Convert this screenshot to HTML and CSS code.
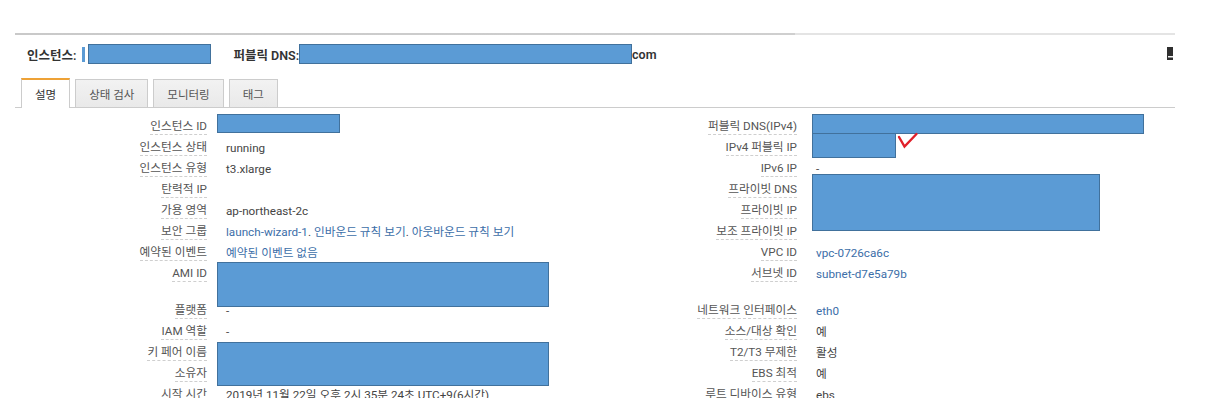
FILE: index.html
```html
<!DOCTYPE html>
<html lang="ko">
<head>
<meta charset="utf-8">
<title>인스턴스 설명</title>
<link rel="stylesheet" href="styles.css">
</head>
<body>
<div class="page">
  <div class="topline"></div>
  <header class="summary">
    <span class="sum-label">인스턴스:</span>
    <span class="sel-bar"></span>
    <span class="redact inst-box"></span>
    <span class="sum-label dns-label">퍼블릭 DNS:</span>
    <span class="redact dns-box"></span>
    <span class="sum-label">com</span>
    <span class="spacer"></span>
    <svg class="corner-icon" width="6" height="13" viewBox="0 0 6 13"><rect x="0" y="0" width="6" height="13" fill="#2f2f2f"/><rect x="1" y="9" width="5" height="1.5" fill="#f2f2f2"/></svg>
  </header>
  <nav class="tabs">
    <span class="tab active">설명</span>
    <span class="tab">상태 검사</span>
    <span class="tab">모니터링</span>
    <span class="tab">태그</span>
  </nav>
  <section class="details">
    <div class="grid">
      <div class="lbl"><span>인스턴스 ID</span></div><div class="val"></div>
      <div class="lbl"><span>퍼블릭 DNS(IPv4)</span></div><div class="val"></div>

      <div class="lbl"><span>인스턴스 상태</span></div><div class="val">running</div>
      <div class="lbl"><span>IPv4 퍼블릭 IP</span></div><div class="val"></div>

      <div class="lbl"><span>인스턴스 유형</span></div><div class="val">t3.xlarge</div>
      <div class="lbl"><span>IPv6 IP</span></div><div class="val">-</div>

      <div class="lbl"><span>탄력적 IP</span></div><div class="val"></div>
      <div class="lbl"><span>프라이빗 DNS</span></div><div class="val"></div>

      <div class="lbl"><span>가용 영역</span></div><div class="val">ap-northeast-2c</div>
      <div class="lbl"><span>프라이빗 IP</span></div><div class="val"></div>

      <div class="lbl"><span>보안 그룹</span></div><div class="val"><a class="link">launch-wizard-1</a>. <a class="link">인바운드 규칙 보기</a>. <a class="link">아웃바운드 규칙 보기</a></div>
      <div class="lbl"><span>보조 프라이빗 IP</span></div><div class="val"></div>

      <div class="lbl"><span>예약된 이벤트</span></div><div class="val"><a class="link">예약된 이벤트 없음</a></div>
      <div class="lbl"><span>VPC ID</span></div><div class="val"><a class="link">vpc-0726ca6c</a></div>

      <div class="lbl"><span>AMI ID</span></div><div class="val two-line"></div>
      <div class="lbl"><span>서브넷 ID</span></div><div class="val"><a class="link">subnet-d7e5a79b</a></div>

      <div class="lbl"><span>플랫폼</span></div><div class="val">-</div>
      <div class="lbl"><span>네트워크 인터페이스</span></div><div class="val"><a class="link">eth0</a></div>

      <div class="lbl"><span>IAM 역할</span></div><div class="val">-</div>
      <div class="lbl"><span>소스/대상 확인</span></div><div class="val">예</div>

      <div class="lbl"><span>키 페어 이름</span></div><div class="val"></div>
      <div class="lbl"><span>T2/T3 무제한</span></div><div class="val">활성</div>

      <div class="lbl"><span>소유자</span></div><div class="val"></div>
      <div class="lbl"><span>EBS 최적</span></div><div class="val">예</div>

      <div class="lbl"><span>시작 시간</span></div><div class="val">2019년 11월 22일 오후 2시 35분 24초 UTC+9(6시간)</div>
      <div class="lbl"><span>루트 디바이스 유형</span></div><div class="val">ebs</div>
    </div>
    <span class="redact ov ov-inst"></span>
    <span class="redact ov ov-pubdns"></span>
    <span class="redact ov ov-ipv4"></span>
    <span class="redact ov ov-priv"></span>
    <span class="redact ov ov-ami"></span>
    <span class="redact ov ov-key"></span>
    <svg class="ov check" width="24" height="18" viewBox="0 0 24 18"><path d="M4 5 L9.5 14.5 L21.5 2" fill="none" stroke="#e0202a" stroke-width="2.4" stroke-linecap="round" stroke-linejoin="miter"/></svg>
  </section>
</div>
</body>
</html>
```

FILE: styles.css
```css
body {
  margin: 0;
  background: #ffffff;
  font-family: Roboto, "Noto Sans CJK KR", sans-serif;
  color: #444444;
}

.page {
  width: 1160px;
  margin-left: 15px;
  padding-top: 33px;
}

.topline {
  height: 2px;
  background: linear-gradient(to right, #c9c9c9 0, #cfcfcf 780px, #e4e4e4 780px, #e4e4e4 100%);
}

.summary {
  display: flex;
  align-items: center;
  height: 38px;
  padding-left: 12px;
  font-size: 12.5px;
  font-weight: 600;
  color: #333333;
}

.sum-label {
  white-space: nowrap;
}

.dns-label {
  margin-left: 22px;
}

.redact {
  display: inline-block;
  box-sizing: border-box;
  background: #5b9bd5;
  border: 1px solid #41719c;
}

.sel-bar {
  display: inline-block;
  width: 3px;
  height: 15px;
  margin-left: 6px;
  background: #5b9bd5;
}

.inst-box {
  width: 123px;
  height: 20px;
  margin-left: 3px;
}

.dns-box {
  width: 333px;
  height: 20px;
  margin-left: 0;
}

.spacer {
  flex: 1;
}

.corner-icon {
  margin-right: 2px;
  margin-top: -2px;
}

.tabs {
  display: flex;
  align-items: flex-end;
  gap: 5px;
  padding: 6px 0 0 6px;
  border-bottom: 1px solid #cccccc;
  height: 28px;
}

.tab {
  box-sizing: border-box;
  height: 28px;
  padding: 0 13px;
  display: flex;
  align-items: center;
  font-size: 11.5px;
  color: #555555;
  background: linear-gradient(#f2f2f2, #e9e9e9);
  border: 1px solid #cccccc;
  border-bottom: none;
}

.tab.active {
  height: 30px;
  margin-bottom: -1px;
  background: #ffffff;
  color: #333333;
  border-top: 2px solid #eea236;
}

.details {
  position: relative;
  box-sizing: border-box;
  height: 290px;
  padding-top: 9px;
  overflow: hidden;
}

.grid {
  display: grid;
  grid-template-columns: 192px 390px 200px 1fr;
  align-items: start;
  font-size: 11.7px;
}

.lbl,
.val {
  height: 16px;
  line-height: 16px;
  padding: 2px 0 3px;
  white-space: nowrap;
}

.lbl {
  display: flex;
  justify-content: flex-end;
  color: #555555;
}

.lbl span {
  display: block;
  height: 15px;
  line-height: 15px;
  border-bottom: 1px dashed #cfcfcf;
}

.val {
  padding-left: 19px;
  color: #444444;
}

.val.two-line {
  height: 32px;
}

.link {
  color: #3c6ea8;
  text-decoration: none;
}

.ov {
  position: absolute;
}

.ov-inst {
  left: 202px;
  top: 6px;
  width: 123px;
  height: 19px;
}

.ov-pubdns {
  left: 797px;
  top: 6px;
  width: 332px;
  height: 20px;
}

.ov-ipv4 {
  left: 797px;
  top: 25px;
  width: 84px;
  height: 25px;
}

.ov-priv {
  left: 797px;
  top: 66px;
  width: 288px;
  height: 57px;
}

.ov-ami {
  left: 202px;
  top: 154px;
  width: 332px;
  height: 45px;
}

.ov-key {
  left: 202px;
  top: 234px;
  width: 332px;
  height: 44px;
}

.check {
  left: 880px;
  top: 24px;
}
```
